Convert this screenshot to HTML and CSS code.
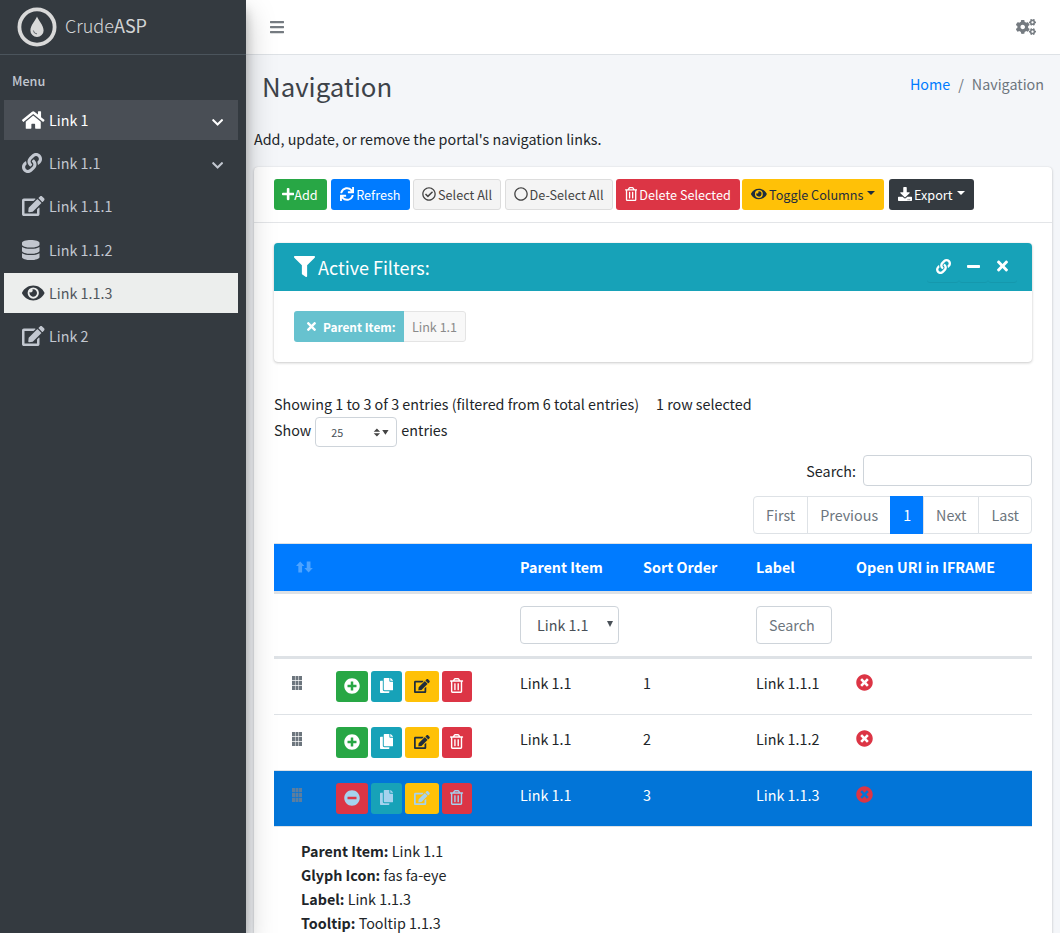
FILE: index.html
```html
<!DOCTYPE html>
<html lang="en">
<head>
<meta charset="utf-8">
<title>Navigation - CrudeASP</title>
<link rel="stylesheet" href="styles.css">
</head>
<body>
<svg class="defs" aria-hidden="true"><defs>
<path id="i-home" d="M280.37 148.26L96 300.11V464a16 16 0 0 0 16 16l112.06-.29a16 16 0 0 0 15.92-16V368a16 16 0 0 1 16-16h64a16 16 0 0 1 16 16v95.64a16 16 0 0 0 16 16.05L464 480a16 16 0 0 0 16-16V300L295.67 148.26a12.19 12.19 0 0 0-15.3 0zM571.6 251.47L488 182.56V44.05a12 12 0 0 0-12-12h-56a12 12 0 0 0-12 12v72.61L318.47 43a48 48 0 0 0-61 0L4.34 251.47a12 12 0 0 0-1.6 16.9l25.5 31A12 12 0 0 0 45.15 301l235.22-193.74a12.19 12.19 0 0 1 15.3 0L530.9 301a12 12 0 0 0 16.9-1.6l25.5-31a12 12 0 0 0-1.7-16.93z"/>
<path id="i-link" d="M326.612 185.391c59.747 59.809 58.927 155.698.36 214.59-.11.12-.24.25-.36.37l-67.2 67.2c-59.27 59.27-155.699 59.262-214.96 0-59.27-59.26-59.27-155.7 0-214.96l37.106-37.106c9.84-9.84 26.786-3.3 27.294 10.606.648 17.722 3.826 35.527 9.69 52.721 1.986 5.822.567 12.262-3.783 16.612l-13.087 13.087c-28.026 28.026-28.905 73.66-1.155 101.96 28.024 28.579 74.086 28.749 102.325.51l67.2-67.19c28.191-28.191 28.073-73.757 0-101.83-3.701-3.694-7.429-6.564-10.341-8.569a16.037 16.037 0 0 1-6.947-12.606c-.396-10.567 3.348-21.456 11.698-29.806l21.054-21.055c5.521-5.521 14.182-6.199 20.584-1.731a152.482 152.482 0 0 1 20.522 17.197zM467.547 44.449c-59.261-59.262-155.69-59.27-214.96 0l-67.2 67.2c-.12.12-.25.25-.36.37-58.566 58.892-59.387 154.781.36 214.59a152.454 152.454 0 0 0 20.521 17.196c6.402 4.468 15.064 3.789 20.584-1.731l21.054-21.055c8.35-8.35 12.094-19.239 11.698-29.806a16.037 16.037 0 0 0-6.947-12.606c-2.912-2.005-6.64-4.875-10.341-8.569-28.073-28.073-28.191-73.639 0-101.83l67.2-67.19c28.239-28.239 74.3-28.069 102.325.51 27.75 28.3 26.872 73.934-1.155 101.96l-13.087 13.087c-4.35 4.35-5.769 10.79-3.783 16.612 5.864 17.194 9.042 34.999 9.69 52.721.509 13.906 17.454 20.446 27.294 10.606l37.106-37.106c59.271-59.259 59.271-155.699.001-214.959z"/>
<path id="i-edit" d="M402.6 83.2l90.2 90.2c3.8 3.8 3.8 10 0 13.8L274.4 405.6l-92.8 10.3c-12.4 1.4-22.9-9.1-21.5-21.5l10.3-92.8L388.8 83.2c3.8-3.8 10-3.8 13.8 0zm162-22.9l-48.8-48.8c-15.2-15.2-39.9-15.2-55.2 0l-35.4 35.4c-3.8 3.8-3.8 10 0 13.8l90.2 90.2c3.8 3.8 10 3.8 13.8 0l35.4-35.4c15.2-15.3 15.2-40 0-55.2zM384 346.2V448H64V128h229.8c3.2 0 6.2-1.3 8.5-3.5l40-40c7.6-7.6 2.2-20.5-8.5-20.5H48C21.5 64 0 85.5 0 112v352c0 26.5 21.5 48 48 48h352c26.5 0 48-21.5 48-48V306.2c0-10.7-12.9-16-20.5-8.5l-40 40c-2.2 2.3-3.5 5.3-3.5 8.5z"/>
<path id="i-database" d="M448 73.143v45.714C448 159.143 347.667 192 224 192S0 159.143 0 118.857V73.143C0 32.857 100.333 0 224 0s224 32.857 224 73.143zM448 176v102.857C448 319.143 347.667 352 224 352S0 319.143 0 278.857V176c48.125 33.143 136.208 48.572 224 48.572S399.874 209.143 448 176zm0 160v102.857C448 479.143 347.667 512 224 512S0 479.143 0 438.857V336c48.125 33.143 136.208 48.572 224 48.572S399.874 369.143 448 336z"/>
<path id="i-eye" d="M572.52 241.4C518.29 135.59 410.93 64 288 64S57.68 135.64 3.48 241.41a32.35 32.35 0 0 0 0 29.19C57.71 376.41 165.07 448 288 448s230.32-71.64 284.52-177.41a32.35 32.35 0 0 0 0-29.19zM288 400a144 144 0 1 1 144-144 143.93 143.93 0 0 1-144 144zm0-240a95.31 95.31 0 0 0-25.31 3.79 47.85 47.85 0 0 1-66.9 66.9A95.78 95.78 0 1 0 288 160z"/>
<path id="i-chevron" d="M207.029 381.476L12.686 187.132c-9.373-9.373-9.373-24.569 0-33.941l22.667-22.667c9.357-9.357 24.522-9.375 33.901-.04L224 284.505l154.745-154.021c9.379-9.335 24.544-9.317 33.901.04l22.667 22.667c9.373 9.373 9.373 24.569 0 33.941L240.971 381.476c-9.373 9.372-24.569 9.372-33.942 0z"/>
<path id="i-bars" d="M16 132h416c8.837 0 16-7.163 16-16V76c0-8.837-7.163-16-16-16H16C7.163 60 0 67.163 0 76v40c0 8.837 7.163 16 16 16zm0 160h416c8.837 0 16-7.163 16-16v-40c0-8.837-7.163-16-16-16H16c-8.837 0-16 7.163-16 16v40c0 8.837 7.163 16 16 16zm0 160h416c8.837 0 16-7.163 16-16v-40c0-8.837-7.163-16-16-16H16c-8.837 0-16 7.163-16 16v40c0 8.837 7.163 16 16 16z"/>
<path id="i-plus" d="M416 208H272V64c0-17.67-14.33-32-32-32h-32c-17.67 0-32 14.33-32 32v144H32c-17.67 0-32 14.33-32 32v32c0 17.67 14.33 32 32 32h144v144c0 17.67 14.33 32 32 32h32c17.67 0 32-14.33 32-32V304h144c17.67 0 32-14.33 32-32v-32c0-17.67-14.33-32-32-32z"/>
<path id="i-sync" d="M440.65 12.57l4 82.77A247.16 247.16 0 0 0 255.83 8C134.73 8 33.91 94.92 12.29 209.82A12 12 0 0 0 24.09 224h49.05a12 12 0 0 0 11.67-9.26 175.91 175.91 0 0 1 317-56.94l-101.46-4.86a12 12 0 0 0-12.57 12v47.41a12 12 0 0 0 12 12H500a12 12 0 0 0 12-12V12a12 12 0 0 0-12-12h-47.37a12 12 0 0 0-11.98 12.57zM255.83 432a175.61 175.61 0 0 1-146-77.8l101.8 4.87a12 12 0 0 0 12.57-12v-47.4a12 12 0 0 0-12-12H12a12 12 0 0 0-12 12V500a12 12 0 0 0 12 12h47.35a12 12 0 0 0 12-12.6l-4.15-82.57A247.17 247.17 0 0 0 255.83 504c121.11 0 221.93-86.92 243.55-201.82a12 12 0 0 0-11.8-14.18h-49.05a12 12 0 0 0-11.67 9.26A175.86 175.86 0 0 1 255.83 432z"/>
<path id="i-check-o" d="M256 8C119.033 8 8 119.033 8 256s111.033 248 248 248 248-111.033 248-248S392.967 8 256 8zm0 48c110.532 0 200 89.451 200 200 0 110.532-89.451 200-200 200-110.532 0-200-89.451-200-200 0-110.532 89.451-200 200-200m140.204 130.267l-22.536-22.718c-4.667-4.705-12.265-4.736-16.97-.068L215.346 303.697l-59.792-60.277c-4.667-4.705-12.265-4.736-16.97-.069l-22.719 22.536c-4.705 4.667-4.736 12.265-.068 16.971l90.781 91.516c4.667 4.705 12.265 4.736 16.97.068l172.589-171.204c4.704-4.668 4.734-12.266.067-16.971z"/>
<path id="i-circle-o" d="M256 8C119 8 8 119 8 256s111 248 248 248 248-111 248-248S393 8 256 8zm0 448c-110.500 0-200-89.500-200-200S145.500 56 256 56s200 89.500 200 200-89.500 200-200 200z"/>
<path id="i-trash" d="M268 416h24a12 12 0 0 0 12-12V188a12 12 0 0 0-12-12h-24a12 12 0 0 0-12 12v216a12 12 0 0 0 12 12zM432 80h-82.410l-34-56.700A48 48 0 0 0 274.410 0H173.590a48 48 0 0 0-41.160 23.300L98.410 80H16A16 16 0 0 0 0 96v16a16 16 0 0 0 16 16h16v336a48 48 0 0 0 48 48h288a48 48 0 0 0 48-48V128h16a16 16 0 0 0 16-16V96a16 16 0 0 0-16-16zM171.840 50.910A6 6 0 0 1 177 48h94a6 6 0 0 1 5.150 2.910L293.610 80H154.390zM368 464H80V128h288zm-212-48h24a12 12 0 0 0 12-12V188a12 12 0 0 0-12-12h-24a12 12 0 0 0-12 12v216a12 12 0 0 0 12 12z"/>
<path id="i-download" d="M216 0h80c13.300 0 24 10.700 24 24v168h87.700c17.800 0 26.700 21.500 14.100 34.100L269.700 378.300c-7.500 7.500-19.800 7.500-27.300 0L90.100 226.100c-12.600-12.600-3.700-34.100 14.100-34.100H192V24c0-13.300 10.700-24 24-24zm296 376v112c0 13.300-10.700 24-24 24H24c-13.300 0-24-10.700-24-24V376c0-13.300 10.700-24 24-24h146.700l49 49c20.100 20.100 52.500 20.100 72.600 0l49-49H488c13.300 0 24 10.700 24 24zm-124 88c0-11-9-20-20-20s-20 9-20 20 9 20 20 20 20-9 20-20zm64 0c0-11-9-20-20-20s-20 9-20 20 9 20 20 20 20-9 20-20z"/>
<path id="i-filter" d="M487.976 0H24.028C2.710 0-8.047 25.866 7.058 40.971L192 225.941V432c0 7.831 3.821 15.170 10.237 19.662l80 55.980C298.020 518.690 320 507.493 320 487.980V225.941l184.947-184.970C520.021 25.896 509.338 0 487.976 0z"/>
<path id="i-times" d="M242.720 256l100.070-100.070c12.280-12.280 12.280-32.190 0-44.480l-22.240-22.240c-12.280-12.280-32.190-12.280-44.480 0L176 189.280 75.930 89.210c-12.280-12.280-32.190-12.280-44.480 0L9.210 111.450c-12.280 12.280-12.280 32.190 0 44.480L109.280 256 9.210 356.070c-12.280 12.280-12.280 32.190 0 44.480l22.240 22.240c12.280 12.280 32.200 12.280 44.480 0L176 322.720l100.070 100.070c12.280 12.280 32.200 12.280 44.480 0l22.240-22.240c12.280-12.280 12.280-32.190 0-44.480L242.720 256z"/>
<path id="i-minus" d="M416 208H32c-17.670 0-32 14.330-32 32v32c0 17.670 14.330 32 32 32h384c17.670 0 32-14.330 32-32v-32c0-17.670-14.330-32-32-32z"/>
<path id="i-cogs" d="M512.100 191l-8.200 14.300c-3 5.300-9.400 7.500-15.100 5.400-11.800-4.400-22.600-10.700-32.100-18.600-4.600-3.800-5.800-10.500-2.800-15.700l8.200-14.300c-6.900-8-12.300-17.300-15.900-27.400h-16.500c-6 0-11.200-4.300-12.200-10.300-2-12-2.100-24.600 0-37.100 1-6 6.200-10.400 12.200-10.400h16.500c3.600-10.100 9-19.400 15.900-27.400l-8.200-14.300c-3-5.200-1.900-11.900 2.800-15.700 9.500-7.900 20.400-14.200 32.100-18.600 5.700-2.100 12.100.1 15.100 5.400l8.200 14.300c10.500-1.900 21.200-1.900 31.700 0L552 6.300c3-5.300 9.400-7.500 15.100-5.400 11.800 4.400 22.600 10.700 32.100 18.600 4.600 3.800 5.800 10.500 2.800 15.700l-8.200 14.300c6.900 8 12.300 17.300 15.900 27.400h16.500c6 0 11.200 4.300 12.200 10.300 2 12 2.100 24.600 0 37.100-1 6-6.200 10.400-12.200 10.400h-16.500c-3.600 10.100-9 19.400-15.900 27.400l8.200 14.300c3 5.200 1.900 11.900-2.800 15.700-9.500 7.900-20.400 14.200-32.100 18.600-5.700 2.100-12.100-.1-15.100-5.400l-8.200-14.300c-10.400 1.900-21.200 1.900-31.700 0zm-10.500-58.800c38.500 29.600 82.400-14.300 52.800-52.800-38.500-29.700-82.400 14.300-52.800 52.800zM386.300 286.100l33.700 16.800c10.100 5.800 14.500 18.100 10.500 29.100-8.900 24.200-26.400 46.400-42.600 65.800-7.400 8.900-20.200 11.100-30.300 5.300l-29.100-16.800c-16 13.700-34.600 24.600-54.900 31.700v33.600c0 11.600-8.300 21.600-19.700 23.600-24.600 4.200-50.400 4.400-75.900 0-11.500-2-20-11.900-20-23.600V418c-20.300-7.200-38.900-18-54.900-31.700L74 403c-10 5.800-22.900 3.600-30.300-5.300-16.200-19.400-33.300-41.600-42.200-65.700-4-10.900.4-23.200 10.500-29.100l33.300-16.800c-3.900-20.900-3.900-42.400 0-63.400L12 205.800c-10.100-5.800-14.600-18.100-10.500-29 8.900-24.200 26-46.400 42.200-65.800 7.400-8.900 20.200-11.100 30.300-5.300l29.100 16.800c16-13.700 34.600-24.600 54.900-31.700V57.100c0-11.500 8.200-21.500 19.600-23.500 24.600-4.200 50.500-4.400 76-.1 11.500 2 20 11.900 20 23.600v33.600c20.300 7.200 38.900 18 54.900 31.700l29.100-16.800c10-5.800 22.900-3.600 30.300 5.300 16.200 19.400 33.200 41.600 42.100 65.800 4 10.900.1 23.200-10 29.100l-33.700 16.800c3.900 21 3.900 42.500 0 63.500zm-117.600 21.100c59.200-77-28.700-164.900-105.700-105.700-59.200 77 28.700 164.900 105.700 105.700zm243.400 182.700l-8.200 14.300c-3 5.300-9.400 7.500-15.100 5.400-11.800-4.400-22.600-10.700-32.100-18.600-4.600-3.800-5.800-10.500-2.800-15.700l8.200-14.300c-6.900-8-12.300-17.300-15.900-27.400h-16.500c-6 0-11.200-4.300-12.200-10.300-2-12-2.100-24.600 0-37.100 1-6 6.200-10.400 12.200-10.400h16.500c3.600-10.100 9-19.400 15.900-27.400l-8.200-14.300c-3-5.200-1.900-11.900 2.800-15.700 9.500-7.900 20.400-14.200 32.100-18.600 5.700-2.100 12.100.1 15.100 5.400l8.200 14.300c10.500-1.900 21.200-1.900 31.700 0l8.200-14.300c3-5.300 9.400-7.500 15.100-5.400 11.800 4.400 22.600 10.700 32.100 18.600 4.600 3.800 5.800 10.500 2.800 15.700l-8.200 14.300c6.900 8 12.300 17.300 15.900 27.400h16.500c6 0 11.200 4.300 12.200 10.300 2 12 2.100 24.600 0 37.100-1 6-6.200 10.400-12.200 10.400h-16.500c-3.600 10.100-9 19.400-15.900 27.400l8.200 14.300c3 5.200 1.900 11.900-2.800 15.700-9.500 7.900-20.400 14.200-32.100 18.600-5.700 2.100-12.100-.1-15.100-5.400l-8.200-14.300c-10.400 1.900-21.200 1.900-31.700 0zM501.600 431c38.500 29.600 82.400-14.300 52.800-52.800-38.500-29.600-82.400 14.300-52.800 52.800z"/>
<path id="i-plus-c" d="M256 8C119 8 8 119 8 256s111 248 248 248 248-111 248-248S393 8 256 8zm144 276c0 6.600-5.400 12-12 12h-92v92c0 6.600-5.400 12-12 12h-56c-6.600 0-12-5.400-12-12v-92h-92c-6.600 0-12-5.400-12-12v-56c0-6.600 5.400-12 12-12h92v-92c0-6.600 5.400-12 12-12h56c6.600 0 12 5.400 12 12v92h92c6.600 0 12 5.400 12 12v56z"/>
<path id="i-minus-c" d="M256 8C119 8 8 119 8 256s111 248 248 248 248-111 248-248S393 8 256 8zM124 296c-6.600 0-12-5.400-12-12v-56c0-6.600 5.400-12 12-12h264c6.600 0 12 5.400 12 12v56c0 6.600-5.400 12-12 12H124z"/>
<path id="i-times-c" d="M256 8C119 8 8 119 8 256s111 248 248 248 248-111 248-248S393 8 256 8zm121.600 313.100c4.700 4.700 4.700 12.300 0 17L338 377.600c-4.700 4.700-12.300 4.700-17 0L256 312l-65.100 65.600c-4.700 4.700-12.300 4.700-17 0L134.400 338c-4.700-4.700-4.700-12.300 0-17l65.600-65-65.600-65.100c-4.700-4.700-4.700-12.300 0-17l39.600-39.600c4.700-4.700 12.300-4.700 17 0l65 65.700 65.100-65.600c4.700-4.700 12.300-4.700 17 0l39.600 39.600c4.700 4.700 4.700 12.300 0 17L312 256l65.600 65.100z"/>
<path id="i-copy" d="M320 448v40c0 13.255-10.745 24-24 24H24c-13.255 0-24-10.745-24-24V120c0-13.255 10.745-24 24-24h72v296c0 30.879 25.121 56 56 56h168zm0-344V0H152c-13.255 0-24 10.745-24 24v368c0 13.255 10.745 24 24 24h272c13.255 0 24-10.745 24-24V128H344c-13.200 0-24-10.800-24-24zm120.971-31.029L375.029 7.029A24 24 0 0 0 358.059 0H352v96h96v-6.059a24 24 0 0 0-7.029-16.970z"/>
<path id="i-grip" d="M0 0h95v135H0zM112 0h95v135h-95zM225 0h95v135h-95zM0 156h95v135H0zM112 156h95v135h-95zM225 156h95v135h-95zM0 313h95v135H0zM112 313h95v135h-95zM225 313h95v135h-95z"/>
<path id="i-sort" d="M112 10L0 135h62v175h100V135h62zM336 310L224 185h62V10h100v175h62z"/>
</defs></svg>

<div class="shell">
  <aside class="sidebar">
    <a class="brand">
      <svg class="brand-logo" viewBox="0 0 40 40"><circle cx="20" cy="20" r="17.600" class="logo-ring"/><path class="logo-drop" d="M20 9.500c-1 3.200-6.600 8.600-6.600 13.900a6.600 6.600 0 0 0 13.200 0C26.600 18.100 21 12.700 20 9.500z"/><path class="logo-glint" d="M16.400 23.500a3.800 3.800 0 0 0 3.600 3.400"/></svg>
      <span class="brand-text">Crude<b>ASP</b></span>
    </a>
    <div class="nav-header">Menu</div>
    <nav class="nav">
      <a class="nav-link is-open"><span class="nav-ic"><svg class="ic ic-home" viewBox="0 0 576 512"><use href="#i-home"/></svg></span><span>Link 1</span><svg class="ic nav-chev" viewBox="0 0 448 512"><use href="#i-chevron"/></svg></a>
      <a class="nav-link"><span class="nav-ic"><svg class="ic" viewBox="0 0 512 512"><use href="#i-link"/></svg></span><span>Link 1.1</span><svg class="ic nav-chev" viewBox="0 0 448 512"><use href="#i-chevron"/></svg></a>
      <a class="nav-link"><span class="nav-ic"><svg class="ic" viewBox="0 0 576 512"><use href="#i-edit"/></svg></span><span>Link 1.1.1</span></a>
      <a class="nav-link"><span class="nav-ic"><svg class="ic" viewBox="0 0 448 512"><use href="#i-database"/></svg></span><span>Link 1.1.2</span></a>
      <a class="nav-link is-current"><span class="nav-ic"><svg class="ic" viewBox="0 0 576 512"><use href="#i-eye"/></svg></span><span>Link 1.1.3</span></a>
      <a class="nav-link"><span class="nav-ic"><svg class="ic" viewBox="0 0 576 512"><use href="#i-edit"/></svg></span><span>Link 2</span></a>
    </nav>
  </aside>

  <div class="main">
    <header class="topbar">
      <svg class="ic top-bars" viewBox="0 0 448 512"><use href="#i-bars"/></svg>
      <svg class="ic top-cogs" viewBox="0 0 640 512"><use href="#i-cogs"/></svg>
    </header>

    <div class="content">
      <div class="page-head">
        <h1>Navigation</h1>
        <div class="crumbs"><a>Home</a><span class="crumb-sep">/</span><span>Navigation</span></div>
      </div>
      <p class="lead">Add, update, or remove the portal's navigation links.</p>

      <section class="card">
        <div class="toolbar">
          <button class="btn btn-green btn-add"><svg class="ic" viewBox="0 0 448 512"><use href="#i-plus"/></svg>Add</button>
          <button class="btn btn-blue"><svg class="ic" viewBox="0 0 512 512"><use href="#i-sync"/></svg>Refresh</button>
          <button class="btn btn-light"><svg class="ic" viewBox="0 0 512 512"><use href="#i-check-o"/></svg>Select All</button>
          <button class="btn btn-light"><svg class="ic" viewBox="0 0 512 512"><use href="#i-circle-o"/></svg>De-Select All</button>
          <button class="btn btn-red"><svg class="ic" viewBox="0 0 448 512"><use href="#i-trash"/></svg>Delete Selected</button>
          <button class="btn btn-yellow btn-toggle"><svg class="ic" viewBox="0 0 576 512"><use href="#i-eye"/></svg>Toggle Columns<i class="caret"></i></button>
          <button class="btn btn-dark"><svg class="ic" viewBox="0 0 512 512"><use href="#i-download"/></svg>Export<i class="caret"></i></button>
        </div>

        <div class="card-body">
          <div class="filters">
            <div class="filters-head">
              <svg class="ic filters-ic" viewBox="0 0 512 512"><use href="#i-filter"/></svg>
              <h3>Active Filters:</h3>
              <div class="tools">
                <span class="tool"><svg class="ic" viewBox="0 0 512 512"><use href="#i-link"/></svg></span>
                <span class="tool"><svg class="ic" viewBox="0 0 448 512"><use href="#i-minus"/></svg></span>
                <span class="tool tool-x"><svg class="ic" viewBox="0 0 352 512"><use href="#i-times"/></svg></span>
              </div>
            </div>
            <div class="filters-body">
              <div class="tag">
                <span class="tag-key"><svg class="ic" viewBox="0 0 352 512"><use href="#i-times"/></svg>Parent Item:</span>
                <span class="tag-val">Link 1.1</span>
              </div>
            </div>
          </div>

          <div class="dt-info"><span>Showing 1 to 3 of 3 entries (filtered from 6 total entries)</span><span>1 row selected</span></div>
          <div class="dt-length">
            <span class="len-text">Show</span>
            <span class="len-wrap">
              <select class="len-select"><option>25</option></select>
              <svg class="len-arrows" viewBox="0 0 24 12"><path d="M1 4.800L5.500.5 10 4.800zM1 7.200h9L5.500 11.500zM13 2.500h9L17.500 9z"/></svg>
            </span>
            <span class="len-text">entries</span>
          </div>
          <div class="dt-search"><label for="q">Search:</label><input id="q" type="search" class="input dt-q"></div>
          <div class="pager">
            <a>First</a><a>Previous</a><a class="on">1</a><a>Next</a><a>Last</a>
          </div>

          <table class="grid">
            <colgroup><col class="c-drag"><col class="c-act"><col class="c-parent"><col class="c-sort"><col class="c-label"><col></colgroup>
            <thead>
              <tr>
                <th class="th-drag"><svg class="ic" viewBox="0 0 448 320"><use href="#i-sort"/></svg></th>
                <th></th><th>Parent Item</th><th>Sort Order</th><th>Label</th><th>Open URI in IFRAME</th>
              </tr>
              <tr class="filter-row">
                <td></td><td></td>
                <td><span class="sel-wrap"><select class="input parent-sel"><option>Link 1.1</option></select><i class="sel-tri"></i></span></td>
                <td></td>
                <td><input class="input label-q" placeholder="Search"></td>
                <td></td>
              </tr>
            </thead>
            <tbody>
              <tr>
                <td class="td-drag"><svg class="ic" viewBox="0 0 320 448"><use href="#i-grip"/></svg></td>
                <td><div class="acts">
                  <span class="act a-add"><svg class="ic" viewBox="0 0 512 512"><use href="#i-plus-c"/></svg></span>
                  <span class="act a-copy"><svg class="ic" viewBox="0 0 448 512"><use href="#i-copy"/></svg></span>
                  <span class="act a-edit"><svg class="ic" viewBox="0 0 576 512"><use href="#i-edit"/></svg></span>
                  <span class="act a-del"><svg class="ic" viewBox="0 0 448 512"><use href="#i-trash"/></svg></span>
                </div></td>
                <td>Link 1.1</td><td>1</td><td>Link 1.1.1</td>
                <td><svg class="ic no-ic" viewBox="0 0 512 512"><use href="#i-times-c"/></svg></td>
              </tr>
              <tr>
                <td class="td-drag"><svg class="ic" viewBox="0 0 320 448"><use href="#i-grip"/></svg></td>
                <td><div class="acts">
                  <span class="act a-add"><svg class="ic" viewBox="0 0 512 512"><use href="#i-plus-c"/></svg></span>
                  <span class="act a-copy"><svg class="ic" viewBox="0 0 448 512"><use href="#i-copy"/></svg></span>
                  <span class="act a-edit"><svg class="ic" viewBox="0 0 576 512"><use href="#i-edit"/></svg></span>
                  <span class="act a-del"><svg class="ic" viewBox="0 0 448 512"><use href="#i-trash"/></svg></span>
                </div></td>
                <td>Link 1.1</td><td>2</td><td>Link 1.1.2</td>
                <td><svg class="ic no-ic" viewBox="0 0 512 512"><use href="#i-times-c"/></svg></td>
              </tr>
              <tr class="selected">
                <td class="td-drag"><svg class="ic" viewBox="0 0 320 448"><use href="#i-grip"/></svg></td>
                <td><div class="acts">
                  <span class="act a-rem"><svg class="ic" viewBox="0 0 512 512"><use href="#i-minus-c"/></svg></span>
                  <span class="act a-copy"><svg class="ic" viewBox="0 0 448 512"><use href="#i-copy"/></svg></span>
                  <span class="act a-edit"><svg class="ic" viewBox="0 0 576 512"><use href="#i-edit"/></svg></span>
                  <span class="act a-del"><svg class="ic" viewBox="0 0 448 512"><use href="#i-trash"/></svg></span>
                </div></td>
                <td>Link 1.1</td><td>3</td><td>Link 1.1.3</td>
                <td><svg class="ic no-ic" viewBox="0 0 512 512"><use href="#i-times-c"/></svg></td>
              </tr>
            </tbody>
          </table>

          <dl class="details">
            <div><dt>Parent Item:</dt> <dd>Link 1.1</dd></div>
            <div><dt>Glyph Icon:</dt> <dd>fas fa-eye</dd></div>
            <div><dt>Label:</dt> <dd>Link 1.1.3</dd></div>
            <div><dt>Tooltip:</dt> <dd>Tooltip 1.1.3</dd></div>
          </dl>
        </div>
      </section>
    </div>
  </div>
</div>
</body>
</html>
```

FILE: styles.css
```css
* { box-sizing: border-box; }
html, body { margin: 0; height: 100%; overflow: hidden; }
body {
  font-family: "Noto Sans CJK SC", "Source Sans Pro", "Noto Sans", sans-serif;
  font-size: 14.320px;
  line-height: 24px;
  color: #212529;
  background: #f4f6f9;
}
.defs { position: absolute; width: 0; height: 0; }
.ic { display: block; height: 1em; width: auto; fill: currentColor; flex: none; }

.shell { display: flex; height: 100%; }

/* sidebar */
.sidebar {
  width: 246px; flex: none; background: #343a40; color: #c2c7d0;
  box-shadow: 0 14px 28px rgba(0,0,0,.25), 0 10px 10px rgba(0,0,0,.22);
  position: relative; z-index: 2;
}
.brand {
  display: flex; align-items: center; height: 55px; padding: 0 0 1px 17px;
  border-bottom: 1px solid #4b545c; color: rgba(255,255,255,.8);
}
.brand-logo { width: 40px; height: 40px; flex: none; }
.logo-ring { fill: none; stroke: #d9d9d9; stroke-width: 3.800; }
.logo-drop { fill: #d9d9d9; }
.logo-glint { fill: none; stroke: #343a40; stroke-width: .7; }
.brand-text { margin: 0 0 3px 8px; font-size: 18px; font-weight: 300; line-height: 30px; }
.brand-text b { font-weight: 400; }
.nav-header { padding: 14px 12px 7px; font-size: 12.600px; font-weight: 500; line-height: 24px; height: 45px; }
.nav { display: flex; flex-direction: column; gap: 3.200px; padding: 0 8px 0 4px; }
.nav-link {
  display: flex; align-items: center; height: 40px; padding-left: 17px; color: #c2c7d0;
}
.nav-ic { width: 28px; display: flex; justify-content: flex-start; font-size: 20px; flex: none; }
.nav-ic .ic { margin: 0 auto 0 1px; }
.nav-chev { margin-left: auto; margin-right: 15px; font-size: 12.800px; position: relative; top: 2px; }
.nav-link.is-open { background: #494e55; color: #fff; }
.nav-link.is-current { background: #eceeed; color: #50565c; }
.is-current .nav-ic { color: #343a40; }

/* main */
.main { flex: 1; min-width: 0; display: flex; flex-direction: column; }
.topbar {
  height: 55px; flex: none; background: #fff; border-bottom: 1px solid #dee2e6;
  display: flex; align-items: center; justify-content: space-between; padding: 0 24px 1px 24px; color: #757b81;
}
.top-bars { font-size: 16px; }
.top-cogs { font-size: 16px; }

.content { flex: 1; padding: 0 8px; overflow: hidden; }
.page-head { display: flex; justify-content: space-between; padding: 14px 8px 0; height: 67px; }
h1 { margin: 0; font-size: 25.800px; font-weight: 400; line-height: 34.600px; color: #3d4349; }
.crumbs { display: flex; color: #6c757d; margin-top: 3px; }
.crumbs a { color: #007bff; }
.crumb-sep { padding: 0 8px; }
.lead { margin: 5px 0 16px; }

.card {
  background: #fff; border-radius: 4px; min-height: 900px;
  box-shadow: 0 0 1px rgba(0,0,0,.125), 0 1px 3px rgba(0,0,0,.2);
}
.toolbar { display: flex; gap: 3.500px; padding: 12px 20px; height: 56px; border-bottom: 1px solid #e3e5e8; }
.btn {
  display: inline-flex; align-items: center; height: 31px; padding: 0 8px 1px; border: 1px solid transparent;
  border-radius: 3px; font: inherit; font-size: 12.660px; line-height: 21px; white-space: nowrap;
}
.btn .ic { font-size: 14px; margin-right: 2px; }
.btn-add { padding: 0 8px 1px 7px; margin-right: 1px; }
.btn-add .ic { margin-right: 0; }
.btn-green { background: #28a745; color: #fff; }
.btn-blue { background: #007bff; color: #fff; }
.btn-light { background: #f4f4f4; border-color: #ddd; color: #444; }
.btn-red { background: #dc3545; color: #fff; }
.btn-yellow { background: #ffc107; color: #1f2d3d; }
.btn-dark { background: #343a40; color: #fff; margin-left: 1px; }
.btn-toggle { margin-left: -1px; }
.caret {
  display: inline-block; margin-left: 4px; margin-bottom: 3px; border-top: 4.200px solid currentColor;
  border-left: 4.200px solid transparent; border-right: 4.200px solid transparent;
}

.card-body { padding: 20px; }
.filters {
  border-radius: 4px; background: #fff; margin-bottom: 30px;
  box-shadow: 0 0 1px rgba(0,0,0,.125), 0 1px 3px rgba(0,0,0,.2);
}
.filters-head {
  display: flex; align-items: center; height: 48px; background: #17a2b8; color: #fff;
  padding: 0 15px 0 20px; border-radius: 4px 4px 0 0;
}
.filters-ic { font-size: 21px; margin-right: 3px; margin-top: -2px; }
.filters-head h3 { margin: 0; font-size: 18px; font-weight: 400; line-height: 30px; }
.tools { margin-left: auto; display: flex; margin-top: -2px; }
.tool {
  display: flex; align-items: center; justify-content: center; width: 29px; height: 31px; font-size: 15px;
  border-radius: 3px; box-shadow: 0 1px 0 rgba(0,0,0,.06);
}
.tool:first-child { width: 32px; }
.tool-x { font-size: 16px; }
.filters-body { padding: 20px; height: 71px; }
.tag { display: inline-flex; height: 31px; font-size: 12.600px; line-height: 29px; border-radius: 3px; overflow: hidden; white-space: nowrap; }
.tag-key {
  display: flex; align-items: center; background: #67c2cf; color: #fff; font-size: 11.900px; font-weight: 600; width: 110px; padding-left: 13px;
}
.tag-key .ic { font-size: 13px; margin-right: 7px; }
.tag-val {
  background: #f8f8f8; border: 1px solid #e4e4e4; border-left: 0; border-radius: 0 3px 3px 0; color: #8a8a8a;
  width: 62px; text-align: center;
}

.dt-info { display: flex; gap: 17px; height: 24px; }
.dt-length { display: flex; align-items: flex-start; height: 31px; gap: 4px; margin-top: 1px; }
.len-text { margin-top: 1px; }
.len-wrap { position: relative; display: block; }
.len-select {
  display: block; appearance: none; width: 82px; height: 30px; padding: 0 0 0 15px; border: 1px solid #ced4da; border-radius: 4px;
  background: #fff; font: inherit; font-size: 10.800px; color: #495057;
}
.len-arrows { position: absolute; right: 7px; top: 11px; width: 17px; height: 9px; fill: #444; }
.dt-search { display: flex; justify-content: flex-end; align-items: center; gap: 7px; margin-top: 7px; height: 31px; }
.input {
  border: 1px solid #ced4da; border-radius: 4px; background: #fff; font: inherit; color: #495057;
}
.dt-q { width: 169px; height: 31px; }
.pager { display: flex; justify-content: flex-end; margin-top: 10px; height: 38px; }
.pager a {
  display: block; padding: 6px 12px; line-height: 24px; border: 1px solid #dee2e6; margin-left: -1px; color: #6c757d; background: #fff;
}
.pager a:first-child { border-radius: 4px 0 0 4px; }
.pager a:last-child { border-radius: 0 4px 4px 0; }
.pager a.on { background: #007bff; border-color: #007bff; color: #fff; }

.grid { width: 100%; table-layout: fixed; border-collapse: separate; border-spacing: 0; margin-top: 9px; }
.c-drag { width: 50px; } .c-act { width: 184px; } .c-parent { width: 123px; } .c-sort { width: 113px; } .c-label { width: 100px; }
.grid th {
  height: 51px; padding: 0 12px 2px; text-align: left; font-weight: 700; color: #fff; background: #007bff;
  border-top: 1px solid #dee2e6; border-bottom: 3px solid #dee2e6;
}
.th-drag .ic { font-size: 12px; color: #4da3ff; margin-left: 10px; }
.grid td { padding: 12px; vertical-align: top; border-bottom: 1px solid #dee2e6; }
.filter-row td { height: 65px; border-bottom: 3px solid #dee2e6; }
.sel-wrap { position: relative; display: block; width: 99px; }
.parent-sel { display: block; appearance: none; width: 99px; height: 38px; padding: 0 0 0 16px; color: #495057; }
.sel-tri {
  position: absolute; right: 6px; top: 15px; border-top: 6px solid #495057;
  border-left: 3.500px solid transparent; border-right: 3.500px solid transparent;
}
.label-q { display: block; width: 76px; height: 38px; padding: 0 12px 2px; }
.label-q::placeholder { color: #6c757d; opacity: 1; }
.td-drag .ic { font-size: 14px; color: #6c757d; margin: 5px 0 0 6px; }
.acts { display: flex; gap: 3px; }
.act {
  display: flex; align-items: center; justify-content: center; height: 31px; padding-bottom: 2px; border-radius: 3px; font-size: 14px; color: #fff;
}
.a-add, .a-rem { width: 32px; font-size: 16px; }
.a-copy { width: 31px; background: #17a2b8; font-size: 15px; }
.a-edit { width: 34px; background: #ffc107; color: #1f2d3d; }
.a-del { width: 30px; background: #dc3545; font-size: 15px; }
.a-add { background: #28a745; }
.a-rem { background: #dc3545; }
.no-ic { color: #dc3545; font-size: 17px; margin-top: 3px; }
.selected td { background: #0275d8; color: #fff; }
.selected .act { color: #a6d2ee; }
.selected .td-drag .ic { color: #5c7e9f; }

.details { margin: 12px 0 0; padding-left: 27px; }
.details div { height: 24px; }
.details dt { display: inline; font-weight: 700; }
.details dd { display: inline; margin: 0; }
```
